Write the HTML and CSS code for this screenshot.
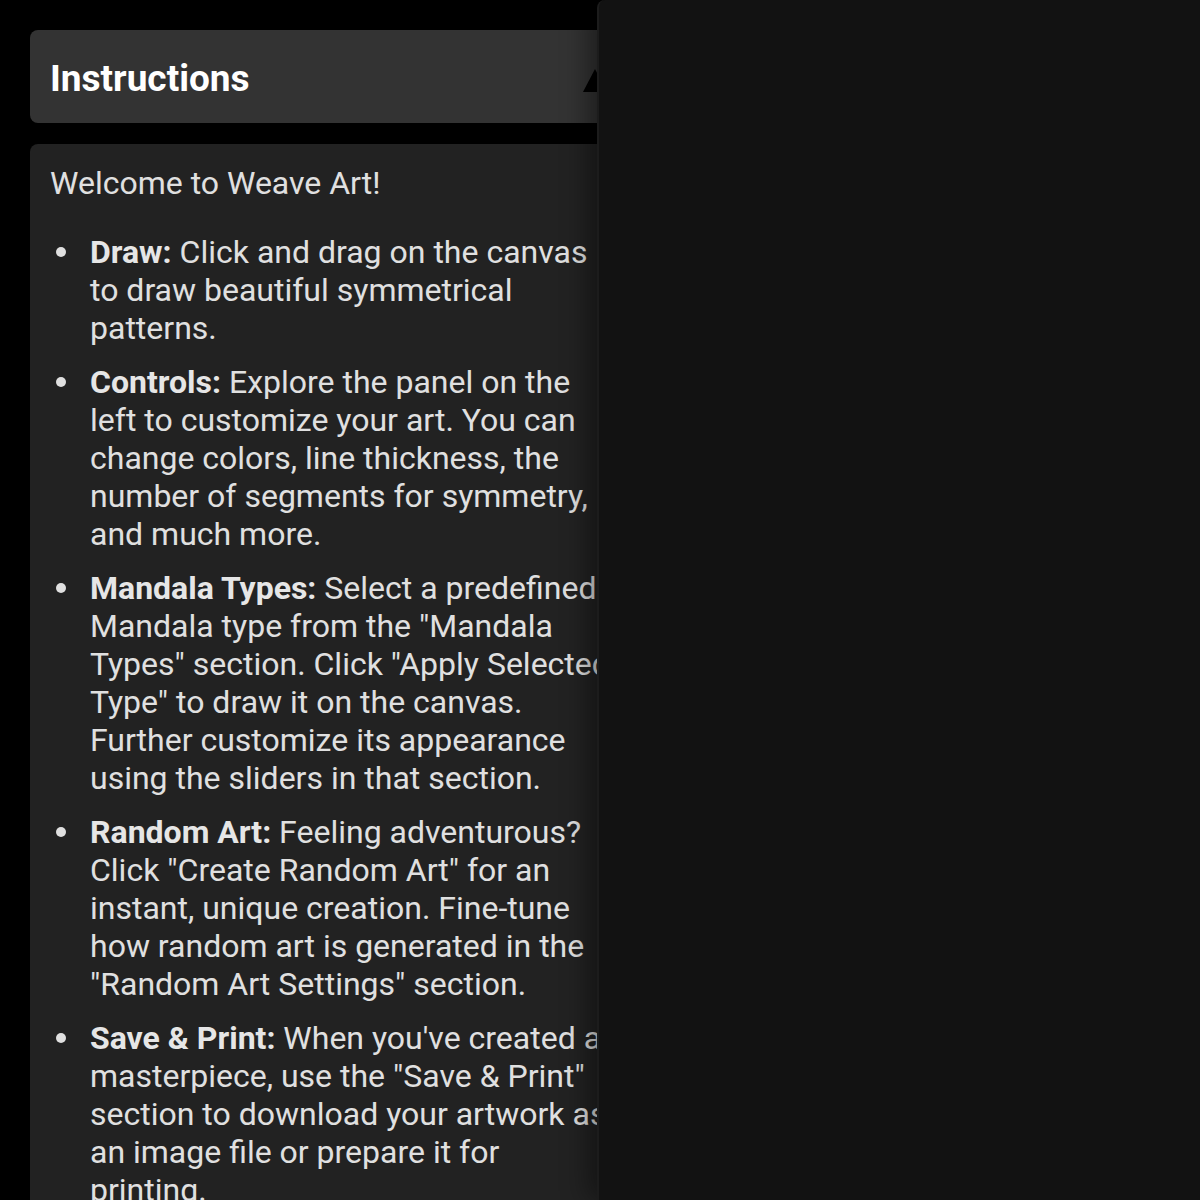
FILE: index.html
```html
<!DOCTYPE html>
<html lang="en">
<head>
<meta charset="utf-8">
<title>Weave Art</title>
<link rel="stylesheet" href="styles.css">
</head>
<body>
<div class="app">
  <aside class="controls">
    <div class="section-header">
      <h2 class="section-title">Instructions</h2>
      <span class="toggle-arrow"></span>
    </div>
    <div class="section-body">
      <p class="welcome">Welcome to Weave Art!</p>
      <ul class="tips">
        <li><strong>Draw:</strong> Click and drag on the canvas to draw beautiful symmetrical patterns.</li>
        <li><strong>Controls:</strong> Explore the panel on the left to customize your art. You can change colors, line thickness, the number of segments for symmetry, and much more.</li>
        <li><strong>Mandala Types:</strong> Select a predefined Mandala type from the "Mandala Types" section. Click "Apply Selected Type" to draw it on the canvas. Further customize its appearance using the sliders in that section.</li>
        <li><strong>Random Art:</strong> Feeling adventurous? Click "Create Random Art" for an instant, unique creation. Fine-tune how random art is generated in the "Random Art Settings" section.</li>
        <li><strong>Save &amp; Print:</strong> When you've created a masterpiece, use the "Save &amp; Print" section to download your artwork as an image file or prepare it for printing.</li>
      </ul>
    </div>
  </aside>
  <main class="canvas-panel"></main>
</div>
</body>
</html>
```

FILE: styles.css
```css
html, body {
  margin: 0;
  padding: 0;
  background: #000;
  height: 100%;
  overflow: hidden;
}
body {
  font-family: Roboto, "Liberation Sans", sans-serif;
  color: #e0e0e0;
}
.app {
  position: relative;
  height: 1200px;
  padding: 30px 0 0 30px;
  box-sizing: border-box;
}
.controls {
  width: 612px;
  display: flex;
  flex-direction: column;
  gap: 21px;
}
.section-header {
  height: 93px;
  background: #333333;
  border-radius: 8px;
  display: flex;
  align-items: center;
  padding: 3px 20px 0;
  box-sizing: border-box;
  position: relative;
}
.section-title {
  margin: 0;
  font-size: 37px;
  font-weight: 700;
  color: #ffffff;
}
.toggle-arrow {
  position: absolute;
  left: 553px;
  top: 39px;
  width: 0;
  height: 0;
  border-left: 12px solid transparent;
  border-right: 12px solid transparent;
  border-bottom: 23px solid #000;
}
.section-body {
  background: #222222;
  border-radius: 8px 8px 0 0;
  padding: 20px 21px 20px 20px;
  font-size: 32px;
  line-height: 38px;
}
.welcome {
  margin: 0 0 31px;
}
.tips {
  margin: 0;
  padding-left: 40px;
  list-style: none;
}
.tips li {
  position: relative;
  margin-bottom: 16px;
}
.tips li::before {
  content: "";
  position: absolute;
  left: -34px;
  top: 14px;
  width: 10px;
  height: 10px;
  border-radius: 50%;
  background: #e0e0e0;
}
.tips strong {
  font-weight: 700;
  color: #e6e6e6;
}
.canvas-panel {
  position: absolute;
  top: 0;
  left: 597px;
  right: 0;
  bottom: 0;
  background: #121212;
  border-left: 2px solid #1c1c1c;
  border-radius: 8px 0 0 0;
  box-shadow: -8px 0 28px rgba(0, 0, 0, 0.45);
}
```
